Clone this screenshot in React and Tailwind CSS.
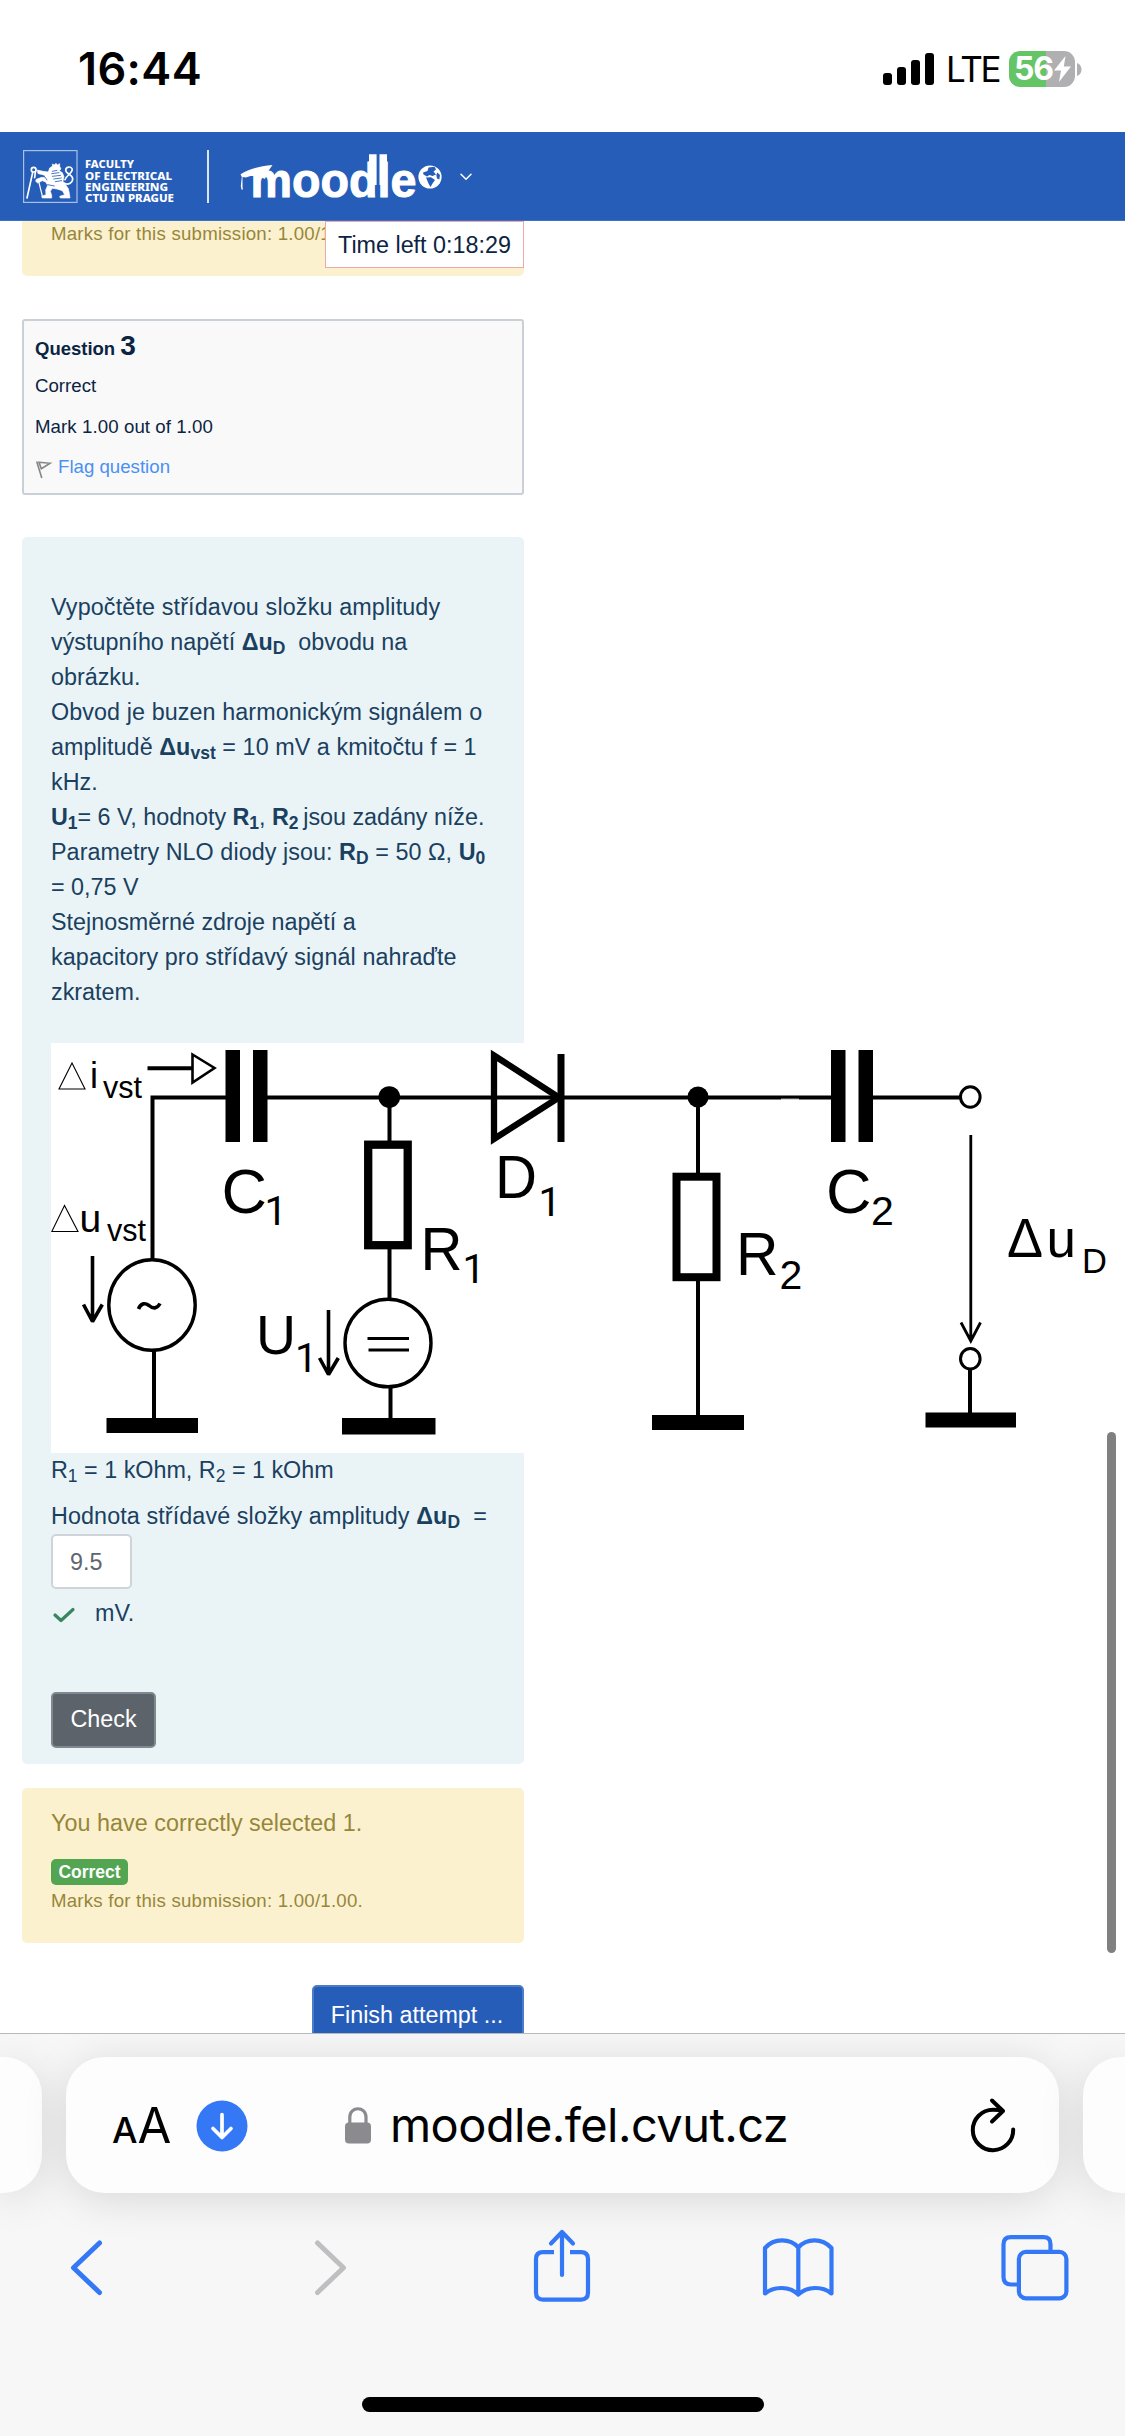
import React from "react";

const Bold = ({ children }) => <b className="font-bold">{children}</b>;

function StatusBar() {
  return (
    <div className="flex h-[132px] shrink-0 items-start justify-between bg-white pl-[78px] pr-[43px] text-black">
      <div className="mt-[42px] font-['Inter'] text-[45px] font-semibold leading-[54px] tracking-[0.4px]">16:44</div>
      <div className="mt-[51px] flex h-[36px] items-center">
        <svg width="52" height="32" viewBox="0 0 52 32">
          <rect x="0" y="20" width="9" height="12" rx="3" />
          <rect x="14" y="14" width="9" height="18" rx="3" />
          <rect x="28" y="7" width="9" height="25" rx="3" />
          <rect x="42" y="0" width="9" height="32" rx="3" />
        </svg>
        <span className="ml-[11px] w-[54px] whitespace-nowrap font-['Inter'] text-[35px] leading-[44px] tracking-[-2.2px]">LTE</span>
        <div className="ml-[9px] flex h-[36px] w-[66px] items-center rounded-[11px] bg-[linear-gradient(90deg,#65c466_0_37px,#b0b0b2_37px)] pl-[5px] text-white">
          <span className="font-['Inter'] text-[32px] font-bold leading-[40px] tracking-[-1.2px]">56</span>
          <svg width="17" height="26" viewBox="0 0 17 26" className="ml-[1px]">
            <path d="M11.500 0 0 14.500h7L5 26 17 10.500H9.800Z" fill="#fff" />
          </svg>
        </div>
        <svg width="5" height="13" viewBox="0 0 5 13" className="ml-[2px]">
          <path d="M0 0C6 2 6 11 0 13Z" fill="#b0b0b2" />
        </svg>
      </div>
    </div>
  );
}

function FacultyLogo() {
  return (
    <svg width="153" height="54" viewBox="23 150 153 54" fill="none" className="overflow-visible">
      <rect x="23.600" y="150.600" width="53.400" height="51.800" stroke="#a9c0e6" strokeWidth="1.200" />
      <g transform="translate(15 140) scale(.33333)" stroke="#fff" strokeLinecap="round" strokeLinejoin="round">
        <circle cx="56" cy="89" r="7" strokeWidth="5" />
        <path d="M53 98 36 174M61 97l-2 16" strokeWidth="5" />
        <path d="M70 120 82 168" strokeWidth="3.500" />
        <path d="M66 90 84 94 100 96 104 84 113 78 112 72 118 75 123 70 127 75 134 71 134 79 138 87 133 92 142 98 147 110 144 124 152 134 160 146 163 160 165 174H136L134 169 149 164 142 152 126 147 112 145 106 154 110 166V174H82L80 169 93 164 92 150 98 136 92 126 82 122 68 129 62 124 64 118 80 112 91 113 84 104 70 101Z" fill="#fff" strokeWidth="2" />
        <path d="M112 94 126 91M110 101 132 98M112 109 137 106M116 117 139 114M121 125 140 122" stroke="#265db8" strokeWidth="2.500" />
        <path d="M148 130C160 136 174 128 173 115 172 103 152 102 152 90 153 80 166 78 171 86 177 96 154 106 150 119" strokeWidth="5" />
        <path d="M86 106 96 120M98 134 118 138" stroke="#265db8" strokeWidth="2.500" />
      </g>
      <g fill="#fff" fontFamily="Noto Sans" fontWeight="800" fontSize="10.300">
        <text x="85" y="168.200" textLength="49" lengthAdjust="spacingAndGlyphs">FACULTY</text>
        <text x="85" y="179.500" textLength="87" lengthAdjust="spacingAndGlyphs">OF ELECTRICAL</text>
        <text x="85" y="190.800" textLength="83" lengthAdjust="spacingAndGlyphs">ENGINEERING</text>
        <text x="85" y="202.100" textLength="89" lengthAdjust="spacingAndGlyphs">CTU IN PRAGUE</text>
      </g>
    </svg>
  );
}

function MoodleLogo() {
  return (
    <svg width="204" height="50" viewBox="240 152 204 50" fill="#fff" className="overflow-visible">
      <text x="250.500" y="197" fontFamily="Liberation Sans" fontWeight="700" fontSize="47.500" textLength="166" lengthAdjust="spacingAndGlyphs" stroke="#fff" strokeWidth="1">moodle</text>
      <path d="M369 154.300h7.600V185h-7.600ZM379.500 154.300h7.500V185H379.500Z" />
      <path d="M240.500 174.300C249 169 259 166.300 272.500 165L267.500 172.200 265 179C258 175.500 250 175 246 177.500L242.500 177 242.500 187 243 189.500 241.500 189.500 240.800 186 241.800 177Z" />
      <circle cx="430" cy="177" r="11.600" />
      <path d="M428.500 167.500 434.500 166.700 436 169.500 433.500 171.500 436 174.500 432.500 176 429.500 175 427 176.500 423.500 174.500 423 172.500 427.500 171ZM426 177.500 431 177.300 435 180 432.500 183.500 430.500 187 428.500 183.500ZM437.300 172.500 440 175 439.300 179.500 437 178.500 436.300 175Z" fill="#265db8" />
    </svg>
  );
}

function Header() {
  return (
    <header className="flex h-[89px] shrink-0 items-start border-b border-[#3f70c2] bg-[#265db8] pl-[23px] pt-[18px]">
      <FacultyLogo />
      <div className="ml-[31px] h-[53px] w-[2px] bg-[#dce6f5]" />
      <div className="ml-[31px] mt-[2px]">
        <MoodleLogo />
      </div>
      <svg width="12" height="8" viewBox="0 0 12 8" className="ml-[16px] mt-[23px]" fill="none" stroke="#fff" strokeWidth="1.500" strokeLinecap="round">
        <path d="M1 1.200 6 6.300 11 1.200" />
      </svg>
    </header>
  );
}

function QuestionInfo() {
  return (
    <section className="mt-[43px] h-[175.500px] w-[502px] rounded-[3px] border-2 border-[#cad0d7] bg-[#f9f9f9] pl-[11px] pt-[6.500px] text-[18.670px] leading-[28px] text-[#0b2442]">
      <h3 className="flex h-[35px] items-baseline leading-[35px]">
        <span className="text-[18.500px] font-bold">Question</span>
        <span className="ml-[5px] text-[28px] font-bold">3</span>
      </h3>
      <div className="mt-[9px]">Correct</div>
      <div className="mt-[13px] tracking-[0.080px]">Mark 1.00 out of 1.00</div>
      <div className="mt-[12px] flex">
        <svg width="23" height="28" viewBox="35 453 23 28" fill="none" stroke="#868686" strokeWidth="1.600">
          <path d="M36.700 461.500 41.800 478M39 462.300 50 463.300 41.300 468.800Z" />
        </svg>
        <span className="text-[#4a90f5]">Flag question</span>
      </div>
    </section>
  );
}

function Circuit() {
  return (
    <svg width="1060" height="409.500" viewBox="51 1043 1060 409.500" className="block max-w-none bg-white" fill="none" stroke="#000">
      <g strokeWidth="4">
        <path d="M226 1097.500H152.500V1260M267 1097.500H831M154 1351V1419M389.500 1097V1142M389.500 1248V1299M390.500 1388V1419M970 1369V1414" />
        <path d="M698 1097V1174M698 1280V1416" />
        <path d="M872 1097.500H960" />
        <path d="M147.500 1068.300H193" />
      </g>
      <g fill="#000" stroke="none">
        <rect x="225.500" y="1050" width="14.500" height="92" />
        <rect x="253" y="1050" width="14.500" height="92" />
        <rect x="831" y="1050" width="14.500" height="92" />
        <rect x="858.500" y="1050" width="14.500" height="92" />
        <circle cx="389.300" cy="1097" r="10.800" />
        <circle cx="698" cy="1097" r="10.500" />
        <rect x="106.500" y="1418" width="91.500" height="15" />
        <rect x="342" y="1418" width="93.500" height="16.500" />
        <rect x="652" y="1415" width="92" height="15" />
        <rect x="925.500" y="1412.500" width="90.500" height="15" />
        <rect x="557.500" y="1054" width="7" height="88" />
      </g>
      <rect x="368.200" y="1144.700" width="39.500" height="100.500" fill="#fff" strokeWidth="8.300" />
      <rect x="676.500" y="1176.700" width="40" height="100.500" fill="#fff" strokeWidth="8" />
      <path d="M494 1055.500 559 1097.500 494 1139Z" strokeWidth="6.300" />
      <path d="M192.500 1054.500 214.500 1068 192.500 1082.500Z" fill="#fff" strokeWidth="2.600" />
      <path d="M781 1099.200h18" stroke="#fff" strokeWidth="1" />
      <ellipse cx="152" cy="1305" rx="43.200" ry="45.200" fill="#fff" strokeWidth="3.400" />
      <ellipse cx="388" cy="1343" rx="43" ry="43.800" fill="#fff" strokeWidth="3.400" />
      <ellipse cx="970.300" cy="1097" rx="9.800" ry="10.300" fill="#fff" strokeWidth="3" />
      <ellipse cx="970.300" cy="1358.800" rx="9.800" ry="10.300" fill="#fff" strokeWidth="3" />
      <path d="M367.500 1338.500H409M368.500 1350H409" strokeWidth="3.200" />
      <path d="M138.500 1309C141 1302.500 145.500 1303 149 1305.500 153 1309 157 1309 160 1303.500" strokeWidth="3.600" />
      <g strokeWidth="3.600" strokeLinejoin="bevel">
        <path d="M92.500 1256V1322M83.500 1304.500 92.500 1321.500 102.300 1304.500" />
        <path d="M328.500 1310V1375M319.500 1358 328.500 1374.500 338.300 1358" />
      </g>
      <path d="M970.800 1135V1341M961 1322.500 970.800 1341 980.500 1322.500" strokeWidth="2.800" />
      <path d="M72 1063 59 1089H85ZM64.500 1205.500 51.800 1231.500H78Z" strokeWidth="1.100" />
      <g fill="#000" stroke="none" fontFamily="Liberation Sans, Arial, sans-serif">
        <text x="90" y="1088" fontSize="36">i</text>
        <text x="103" y="1098" fontSize="31" textLength="39" lengthAdjust="spacingAndGlyphs">vst</text>
        <text x="79.500" y="1231.500" fontSize="39">u</text>
        <text x="107" y="1240.500" fontSize="31" textLength="39" lengthAdjust="spacingAndGlyphs">vst</text>
        <text x="221.500" y="1213.300" fontSize="63">C</text>
        <text x="495" y="1198" fontSize="61" textLength="42" lengthAdjust="spacingAndGlyphs">D</text>
        <text x="420.500" y="1269.500" fontSize="61" textLength="42" lengthAdjust="spacingAndGlyphs">R</text>
        <text x="256" y="1353.500" fontSize="56" textLength="40" lengthAdjust="spacingAndGlyphs">U</text>
        <text x="736" y="1274.500" fontSize="62" textLength="42.500" lengthAdjust="spacingAndGlyphs">R</text>
        <text x="779.500" y="1288.500" fontSize="41">2</text>
        <text x="826" y="1213.300" fontSize="63">C</text>
        <text x="871" y="1224.500" fontSize="41">2</text>
        <text x="1007" y="1257" fontSize="56" textLength="36" lengthAdjust="spacingAndGlyphs">Δ</text>
        <text x="1046.500" y="1257" fontSize="53">u</text>
        <text x="1082" y="1273" fontSize="34.500">D</text>
      </g>
      <g fill="#000" stroke="none" fontFamily="Roboto, sans-serif" fontSize="40">
        <text x="264.500" y="1225">1</text>
        <text x="538.500" y="1216">1</text>
        <text x="462.500" y="1283">1</text>
        <text x="295" y="1371.500">1</text>
      </g>
    </svg>
  );
}

function QuestionBody() {
  return (
    <section className="mt-[42px] h-[1227.500px] w-[502px] rounded-[5px] bg-[#eaf4f7] pl-[29px] pt-[53px] text-[23.330px] leading-[35px] text-[#1a4060]">
      <div className="whitespace-nowrap">
        <div className="tracking-[0.140px]">Vypočtěte střídavou složku amplitudy</div>
        <div>výstupního napětí <Bold>Δu<sub>D</sub></Bold>&nbsp; obvodu na</div>
        <div>obrázku.</div>
        <div className="tracking-[0.090px]">Obvod je buzen harmonickým signálem o</div>
        <div className="tracking-[0.060px]">amplitudě <Bold>Δu<sub>vst</sub></Bold> = 10 mV a kmitočtu f = 1</div>
        <div>kHz.</div>
        <div className="tracking-[-0.030px]"><Bold>U<sub>1</sub></Bold>= 6 V, hodnoty <Bold>R<sub>1</sub></Bold>, <Bold>R<sub>2 </sub></Bold>jsou zadány níže.</div>
        <div className="tracking-[0.060px]">Parametry NLO diody jsou: <Bold>R<sub>D</sub></Bold> = 50 Ω, <Bold>U<sub>0</sub></Bold></div>
        <div>= 0,75 V</div>
        <div>Stejnosměrné zdroje napětí a</div>
        <div className="tracking-[0.090px]">kapacitory pro střídavý signál nahraďte</div>
        <div>zkratem.</div>
      </div>
      <div className="mt-[33.500px] h-[409.500px]">
        <Circuit />
      </div>
      <div className="whitespace-nowrap">R<sub>1</sub> = 1 kOhm, R<sub>2</sub> = 1 kOhm</div>
      <div className="mt-[11.500px] whitespace-nowrap tracking-[0.100px]">Hodnota střídavé složky amplitudy <Bold>Δu<sub>D</sub></Bold>&nbsp; =</div>
      <div className="h-[55px] w-[81px] rounded-[5px] border-2 border-[#cfd4da] bg-white pl-[17px] leading-[52px] text-[#60666f]">9.5</div>
      <div className="mt-[6.500px] flex">
        <svg width="44" height="35" viewBox="51 1596 44 35" fill="none" stroke="#398560" strokeWidth="3.200" strokeLinecap="round" strokeLinejoin="round">
          <path d="M55 1615 61 1620.500 73 1609.500" />
        </svg>
        <span>mV.</span>
      </div>
      <button className="mt-[61px] block h-[56px] w-[105px] rounded-[5px] border-2 border-[#828890] bg-[#5c636b] text-center leading-[51px] text-white">Check</button>
    </section>
  );
}

function Feedback() {
  return (
    <section className="mt-[24px] h-[155px] w-[502px] rounded-[5px] bg-[#fcf1cf] pl-[29px] pt-[18px] text-[23.330px] leading-[35px] text-[#96863a]">
      <div className="tracking-[0.030px]">You have correctly selected 1.</div>
      <div className="mt-[18px] h-[26px] w-[77px] rounded-[5px] bg-[#53a551] text-center text-[17.500px] font-bold leading-[26px] text-white">Correct</div>
      <div className="mt-[2px] text-[18.670px] leading-[28px] tracking-[0.220px]">Marks for this submission: 1.00/1.00.</div>
    </section>
  );
}

function Page() {
  return (
    <main className="relative h-[1812px] shrink-0 overflow-hidden bg-white pl-[22px] font-['Liberation_Sans',Arial,sans-serif]">
      <section className="h-[55px] w-[502px] rounded-b-[5px] bg-[#fcf1cf] pl-[29px] text-[18.670px] leading-[26px] tracking-[0.220px] text-[#96863a]">
        Marks for this submission: 1.00/1
      </section>
      <div className="absolute left-[325px] top-0 h-[47px] w-[199px] border border-[#eba9a9] bg-white pl-[12px] pt-[6px] text-[23.330px] leading-[35px] text-[#0b2442]">
        Time left 0:18:29
      </div>
      <QuestionInfo />
      <QuestionBody />
      <Feedback />
      <button className="ml-[290px] mt-[42px] block h-[60px] w-[212px] rounded-[5px] border-2 border-[#4a7cc8] bg-[#265db8] pr-[2px] text-center text-[23.330px] leading-[53px] text-white">
        Finish attempt ...
      </button>
      <div className="absolute left-[1107px] top-[1211px] h-[521px] w-[9px] rounded-full bg-[#808080]" />
    </main>
  );
}

function SafariBar() {
  return (
    <footer className="flex h-[403px] shrink-0 flex-col overflow-hidden border-t border-[#b8b9bb] bg-[#f7f7f8]">
      <div className="mt-[23px] flex h-[136px] w-[1125px] justify-between">
        <div className="w-[42px] rounded-r-[38px] bg-[#fdfdfe] shadow-[0_6px_44px_rgba(0,0,0,0.13)]" />
        <div className="flex w-[993px] items-center rounded-[38px] bg-[#fdfdfe] pl-[46px] pr-[43px] shadow-[0_6px_44px_rgba(0,0,0,0.13)]">
          <div className="mt-[5px] flex w-[62px] items-baseline font-['Inter'] leading-[52px] text-black">
            <span className="text-[36px] font-medium">A</span>
            <span className="text-[49px]">A</span>
          </div>
          <svg width="52" height="52" viewBox="0 0 52 52" className="ml-[22px] mt-[2px]" fill="none">
            <circle cx="26" cy="26" r="25.500" fill="#3478f6" />
            <path d="M26 14.500V37M17 28.500 26 37.500 35 28.500" stroke="#fff" strokeWidth="3.700" strokeLinecap="round" strokeLinejoin="round" />
          </svg>
          <svg width="26" height="37" viewBox="0 0 26 37" className="ml-[97px]" fill="none">
            <rect x="0" y="15.500" width="26" height="21" rx="4" fill="#8a8a8f" />
            <path d="M4.800 16V10C4.800-1 21 -1 21 10V16" stroke="#8a8a8f" strokeWidth="3.200" />
          </svg>
          <span className="ml-[19px] w-[398px] whitespace-nowrap font-['Inter'] text-[47px] leading-[56px] tracking-[-0.550px] text-black">moodle.fel.cvut.cz</span>
          <svg width="46" height="56" viewBox="970 2095 46 56" className="ml-auto" fill="none" stroke="#000" strokeWidth="4" strokeLinecap="round" strokeLinejoin="round">
            <path d="M1013.200 2127.500A20.200 20.200 0 1 1 993 2107.800C997 2107.800 1000 2108 1003 2109M992 2098.500 1003 2109 992 2119.500" />
          </svg>
        </div>
        <div className="w-[42px] rounded-l-[38px] bg-[#fdfdfe] shadow-[0_6px_44px_rgba(0,0,0,0.13)]" />
      </div>
      <nav className="mt-[34px] flex h-[80px] items-center pl-[69px]">
        <svg width="36" height="80" viewBox="69 2227 36 80" fill="none" stroke="#3478f6" strokeWidth="5" strokeLinecap="round" strokeLinejoin="round">
          <path d="M99.500 2243 73.500 2267.700 99.500 2292.500" />
        </svg>
        <svg width="36" height="80" viewBox="313 2227 36 80" className="ml-[208px]" fill="none" stroke="#bfbfc1" strokeWidth="5" strokeLinecap="round" strokeLinejoin="round">
          <path d="M317.500 2243 343.500 2267.700 317.500 2292.500" />
        </svg>
        <svg width="60" height="80" viewBox="532 2227 60 80" className="ml-[183px]" fill="none" stroke="#3478f6" strokeWidth="4.200" strokeLinecap="round" strokeLinejoin="round">
          <path d="M554 2252.200H543C538.500 2252.200 536 2254.500 536 2259V2292.500C536 2297 538.500 2299.600 543 2299.600H581C585.500 2299.600 588 2297 588 2292.500V2259C588 2254.500 585.500 2252.200 581 2252.200H570" strokeLinecap="butt" />
          <path d="M562 2275V2232.500M551 2243.500 562 2232 573 2243.500" />
        </svg>
        <svg width="74" height="80" viewBox="761 2227 74 80" className="ml-[169px]" fill="none" stroke="#3478f6" strokeWidth="4.200" strokeLinecap="round" strokeLinejoin="round">
          <path d="M798.300 2247.500V2294.500M798.300 2247.500C790 2238 774 2238 765 2248V2293.500C775 2286 789 2286 798.300 2294.500M798.300 2247.500C807 2238 822 2238 831.500 2248V2293.500C822 2286 808 2286 798.300 2294.500" />
        </svg>
        <svg width="70" height="80" viewBox="1000 2227 70 80" className="ml-[165px]" fill="none" stroke="#3478f6" strokeWidth="4.200">
          <rect x="1018.900" y="2251.900" width="47.500" height="46.500" rx="7" />
          <path d="M1017 2284.500H1011C1006 2284.500 1003.500 2282 1003.500 2277V2244.500C1003.500 2239.500 1006 2237.200 1011 2237.200H1043.500C1048.500 2237.200 1050.500 2239.500 1050.500 2244.500V2250" />
        </svg>
      </nav>
      <div className="mx-auto mt-[90px] h-[15px] w-[402px] rounded-full bg-black" />
    </footer>
  );
}

export default function App() {
  return (
    <div className="flex h-[2436px] w-[1125px] flex-col overflow-hidden bg-white">
      <StatusBar />
      <Header />
      <Page />
      <SafariBar />
    </div>
  );
}
